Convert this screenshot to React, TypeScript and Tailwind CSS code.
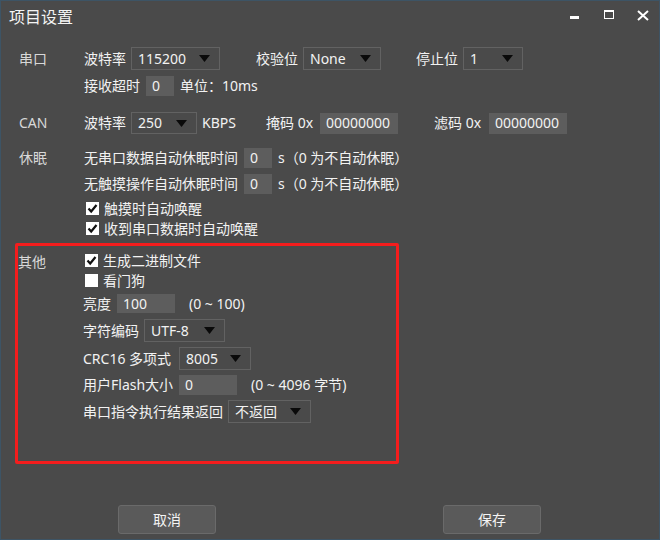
import React from "react";

const Arrow = () => (
  <svg width="11" height="7" viewBox="0 0 11 7" className="shrink-0">
    <polygon points="0,0 11,0 5.5,7" fill="#0a0a0a" />
  </svg>
);

const Select = ({ value, w, h = 23 }: { value: string; w: string; h?: number }) => (
  <div
    className={`${w} ${h === 22 ? "h-[22px]" : "h-[23px]"} border border-[#626262] flex items-center justify-between pl-[6px] pr-[9px] shrink-0`}
  >
    <span className="text-[#f2f2f2] leading-none">{value}</span>
    <Arrow />
  </div>
);

const Input = ({ value, w, h }: { value: string; w: string; h: string }) => (
  <div className={`${w} ${h} bg-[#5d5d5d] flex items-center pl-[6px] shrink-0`}>
    <span className="text-[#f2f2f2] leading-none">{value}</span>
  </div>
);

const Check = ({ checked, label }: { checked: boolean; label: string }) => (
  <div className="h-[15px] flex items-center">
    <div className="w-[2px]" />
    <svg width="13" height="13" viewBox="0 0 13 13" className="shrink-0">
      <rect x="0" y="0" width="13" height="13" fill="#ffffff" />
      {checked && (
        <polyline points="2.5,6.5 5.2,9.5 10.5,3" fill="none" stroke="#111" strokeWidth="2.2" />
      )}
    </svg>
    <span className="ml-[5px] text-[#f2f2f2] leading-none">{label}</span>
  </div>
);

export default function App() {
  return (
    <div className="w-[660px] h-[540px] bg-[#4a4a4a] border border-[#3d5465] flex flex-col text-[14px] font-['Noto_Sans','Noto_Sans_CJK_SC',sans-serif] text-[#f2f2f2] overflow-hidden">
      {/* Title bar */}
      <div className="h-[32px] flex items-start shrink-0">
        <div className="h-[32px] flex items-center pl-[8px] text-[16px] text-[#f4f4f4] leading-none">项目设置</div>
        <div className="ml-auto flex items-start pr-[10px]">
          <div className="mt-[15px] w-[9px] h-[3px] bg-white" />
          <div className="ml-[25px] mt-[9px] w-[10px] h-[9px] border border-white border-t-2" />
          <svg className="ml-[23px] mt-[9px]" width="12" height="11" viewBox="0 0 12 11">
            <line x1="1" y1="1" x2="11" y2="10" stroke="white" strokeWidth="2" />
            <line x1="11" y1="1" x2="1" y2="10" stroke="white" strokeWidth="2" />
          </svg>
        </div>
      </div>

      {/* 串口 */}
      <div className="mt-[14px] pl-[18px] flex">
        <div className="w-[65px] h-[23px] flex items-center text-[#d8d8d8] leading-none">串口</div>
        <div className="flex flex-col">
          <div className="h-[23px] flex items-center">
            <span className="w-[47px] leading-none">波特率</span>
            <Select value="115200" w="w-[89px]" />
            <span className="ml-[36px] w-[47px] leading-none">校验位</span>
            <Select value="None" w="w-[78px]" />
            <span className="ml-[35px] w-[47px] leading-none">停止位</span>
            <Select value="1" w="w-[60px]" />
          </div>
          <div className="mt-[6px] h-[20px] flex items-center">
            <span className="w-[62px] leading-none">接收超时</span>
            <Input value="0" w="w-[28px]" h="h-[20px]" />
            <span className="ml-[6px] leading-none">单位：10ms</span>
          </div>
        </div>
      </div>

      {/* CAN */}
      <div className="mt-[16px] pl-[18px] flex">
        <div className="w-[65px] h-[22px] flex items-center text-[#d8d8d8] leading-none">CAN</div>
        <div className="h-[22px] flex items-center">
          <span className="w-[47px] leading-none">波特率</span>
          <Select value="250" w="w-[66px]" h={22} />
          <span className="ml-[5px] w-[64px] leading-none">KBPS</span>
          <span className="w-[54px] leading-none">掩码 0x</span>
          <Input value="00000000" w="w-[78px]" h="h-[21px]" />
          <span className="ml-[36px] w-[55px] leading-none">滤码 0x</span>
          <Input value="00000000" w="w-[78px]" h="h-[21px]" />
        </div>
      </div>

      {/* 休眠 */}
      <div className="mt-[14px] pl-[18px] flex">
        <div className="w-[65px] h-[20px] flex items-center text-[#d8d8d8] leading-none">休眠</div>
        <div className="flex flex-col">
          <div className="h-[20px] flex items-center">
            <span className="w-[160px] leading-none">无串口数据自动休眠时间</span>
            <Input value="0" w="w-[28px]" h="h-[20px]" />
            <span className="ml-[6px] leading-none">s（0 为不自动休眠）</span>
          </div>
          <div className="mt-[6px] h-[20px] flex items-center">
            <span className="w-[160px] leading-none">无触摸操作自动休眠时间</span>
            <Input value="0" w="w-[28px]" h="h-[20px]" />
            <span className="ml-[6px] leading-none">s（0 为不自动休眠）</span>
          </div>
          <div className="mt-[7px]">
            <Check checked label="触摸时自动唤醒" />
          </div>
          <div className="mt-[5px]">
            <Check checked label="收到串口数据时自动唤醒" />
          </div>
        </div>
      </div>

      {/* 其他 (annotated red box) */}
      <div className="mt-[7px] ml-[14px] w-[384px] h-[221px] border-[3px] border-[#f41d1d] rounded-[2px] flex shrink-0">
        <div className="w-[65px] pt-[7px]">
          <div className="h-[18px] flex items-center text-[#d8d8d8] leading-none">其他</div>
        </div>
        <div className="flex flex-col pt-[7px]">
          <Check checked label="生成二进制文件" />
          <div className="mt-[5px]">
            <Check checked={false} label="看门狗" />
          </div>
          <div className="mt-[6px] h-[19px] flex items-center">
            <span className="w-[34px] leading-none">亮度</span>
            <Input value="100" w="w-[58px]" h="h-[19px]" />
            <span className="ml-[14px] leading-none">(0 ~ 100)</span>
          </div>
          <div className="mt-[6px] h-[23px] flex items-center">
            <span className="w-[61px] leading-none">字符编码</span>
            <Select value="UTF-8" w="w-[81px]" />
          </div>
          <div className="mt-[5px] h-[23px] flex items-center">
            <span className="w-[96px] leading-none">CRC16 多项式</span>
            <Select value="8005" w="w-[72px]" />
          </div>
          <div className="mt-[5px] h-[20px] flex items-center">
            <span className="w-[96px] leading-none">用户Flash大小</span>
            <Input value="0" w="w-[58px]" h="h-[20px]" />
            <span className="ml-[14px] leading-none">(0 ~ 4096 字节)</span>
          </div>
          <div className="mt-[5px] h-[23px] flex items-center">
            <span className="w-[145px] leading-none">串口指令执行结果返回</span>
            <Select value="不返回" w="w-[83px]" />
          </div>
        </div>
      </div>

      {/* Buttons */}
      <div className="mt-[41px] pl-[117px] flex">
        <button className="w-[98px] h-[29px] bg-[#5a5a5a] border border-[#6a6a6a] rounded-[3px] text-[#f4f4f4] leading-none">取消</button>
        <button className="ml-[227px] w-[98px] h-[29px] bg-[#5a5a5a] border border-[#6a6a6a] rounded-[3px] text-[#f4f4f4] leading-none">保存</button>
      </div>
    </div>
  );
}
